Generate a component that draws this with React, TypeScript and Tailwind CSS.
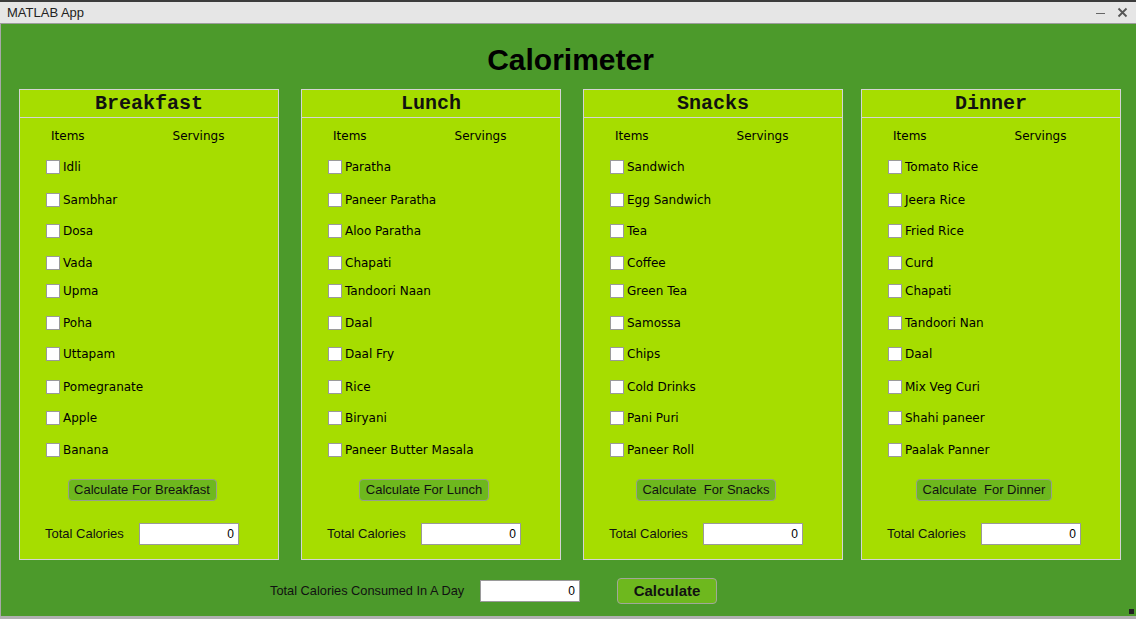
import React from "react";

type Meal = {
  title: string;
  items: string[];
  button: string;
  btnW: string;
  ml: string;
};

const meals: Meal[] = [
  {
    title: "Breakfast",
    items: ["Idli", "Sambhar", "Dosa", "Vada", "Upma", "Poha", "Uttapam", "Pomegranate", "Apple", "Banana"],
    button: "Calculate For Breakfast",
    btnW: "w-[149px]",
    ml: "ml-[18px]",
  },
  {
    title: "Lunch",
    items: ["Paratha", "Paneer Paratha", "Aloo Paratha", "Chapati", "Tandoori Naan", "Daal", "Daal Fry", "Rice", "Biryani", "Paneer Butter Masala"],
    button: "Calculate For Lunch",
    btnW: "w-[130px]",
    ml: "ml-[22px]",
  },
  {
    title: "Snacks",
    items: ["Sandwich", "Egg Sandwich", "Tea", "Coffee", "Green Tea", "Samossa", "Chips", "Cold Drinks", "Pani Puri", "Paneer Roll"],
    button: "Calculate  For Snacks",
    btnW: "w-[140px]",
    ml: "ml-[22px]",
  },
  {
    title: "Dinner",
    items: ["Tomato Rice", "Jeera Rice", "Fried Rice", "Curd", "Chapati", "Tandoori Nan", "Daal", "Mix Veg Curi", "Shahi paneer", "Paalak Panner"],
    button: "Calculate  For Dinner",
    btnW: "w-[136px]",
    ml: "ml-[18px]",
  },
];

const rowMargins = [
  "mt-[15px]",
  "mt-[17px]",
  "mt-[15px]",
  "mt-[16px]",
  "mt-[12px]",
  "mt-[16px]",
  "mt-[15px]",
  "mt-[17px]",
  "mt-[15px]",
  "mt-[16px]",
];

const arial = "font-['Liberation_Sans',Arial,sans-serif]";
const labelFont = "font-['DejaVu_Sans','Noto_Sans',sans-serif]";

function Panel({ meal }: { meal: Meal }) {
  return (
    <div className={`${meal.ml} w-[260px] h-[471px] bg-[#a6dd00] border border-[#d4d4d4] flex flex-col shrink-0`}>
      <div className="h-[28px] border-b border-[#d4d4d4] flex items-center justify-center">
        <span className="font-['Liberation_Mono','Courier_New',monospace] font-bold text-[20px] leading-none text-[#111]">
          {meal.title}
        </span>
      </div>
      <div className={`mt-[10px] h-[16px] flex items-center text-[12px] leading-none text-black ${labelFont}`}>
        <span className="ml-[31px]">Items</span>
        <span className="ml-[88px]">Servings</span>
      </div>
      {meal.items.map((it, i) => (
        <div key={it + i} className={`${rowMargins[i]} h-[16px] flex items-center ml-[26px]`}>
          <span className="w-[14px] h-[14px] bg-white border border-[#9a9a9a] shrink-0" />
          <span className={`ml-[3px] text-[12px] leading-none text-black ${labelFont}`}>{it}</span>
        </div>
      ))}
      <div className="mt-[21px] flex justify-center pr-[14px]">
        <div
          className={`${meal.btnW} h-[22px] bg-[#6eb81e] border border-[#979f8c] rounded-[4px] flex items-center justify-center text-[13px] text-[#111] ${arial}`}
        >
          <span className="whitespace-pre">{meal.button}</span>
        </div>
      </div>
      <div className={`mt-[22px] h-[22px] flex items-center ${arial}`}>
        <span className="ml-[25px] text-[13px] text-[#111] w-[94px]">Total Calories</span>
        <div className="w-[100px] h-[22px] bg-white border border-[#9a9a9a] flex items-center justify-end pr-[4px] text-[12px] text-black">
          0
        </div>
      </div>
    </div>
  );
}

export default function App() {
  return (
    <div className="w-[1136px] h-[619px] flex flex-col overflow-hidden bg-[#4c9a2b]">
      <div className="h-[24px] shrink-0 bg-[#e6e6e6] border-t-[2px] border-t-[#3c3c3c] border-b border-b-[#9c9c9c] flex items-center">
        <span className={`ml-[7px] text-[13px] text-[#222] ${arial}`}>MATLAB App</span>
        <div className="ml-auto flex items-center mr-[8px] text-[#555]">
          <span className="w-[9px] h-[1.5px] bg-[#666] mr-[12px] mt-[2px]" />
          <svg width="11" height="11" viewBox="0 0 11 11">
            <path d="M1.5 1.5 L9.5 9.5 M9.5 1.5 L1.5 9.5" stroke="#555" strokeWidth="1.8" />
          </svg>
        </div>
      </div>
      <div className="flex-1 flex flex-col border-l border-[#a8a8a8] relative">
        <div className="h-[65px] pt-[7px] pl-[4px] flex items-center justify-center">
          <h1 className={`text-[30px] font-bold text-black leading-none ${arial}`}>Calorimeter</h1>
        </div>
        <div className="flex">
          {meals.map((m) => (
            <Panel key={m.title} meal={m} />
          ))}
        </div>
        <div className={`mt-[18px] h-[26px] flex items-center ${arial}`}>
          <span className="ml-[269px] text-[12.8px] text-[#111] w-[210px]">Total Calories Consumed In A Day</span>
          <div className="w-[100px] h-[22px] bg-white border border-[#9a9a9a] flex items-center justify-end pr-[4px] text-[12px] text-black">
            0
          </div>
          <div className="ml-[37px] w-[100px] h-[26px] bg-[#6eb81e] border border-[#a0a898] rounded-[4px] flex items-center justify-center text-[15px] font-bold text-[#111]">
            Calculate
          </div>
        </div>
        <div className="absolute right-[2px] bottom-[2px] w-[5px] h-[5px] bg-[#222]" />
      </div>
      <div className="h-[3px] shrink-0 bg-[#b0b0b0]" />
    </div>
  );
}
